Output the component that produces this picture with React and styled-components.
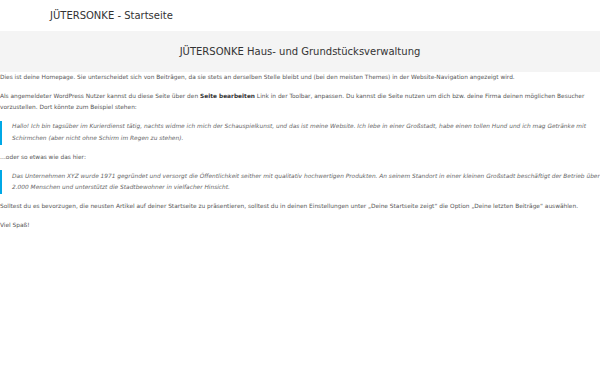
import styled, { createGlobalStyle } from "styled-components";

const GlobalStyle = createGlobalStyle`
  body {
    margin: 0;
    background: #fff;
    font-family: "DejaVu Sans", Verdana, sans-serif;
    color: #555;
  }
`;

export default function App() {
  return (
    <>
      <GlobalStyle />
      <SiteHeader>
        <SiteTitle>JÜTERSONKE - Startseite</SiteTitle>
      </SiteHeader>
      <Hero>
        <HeroTitle>JÜTERSONKE Haus- und Grundstücksverwaltung</HeroTitle>
      </Hero>
      <Content>
        <P>
          Dies ist deine Homepage. Sie unterscheidet sich von Beiträgen, da sie stets an derselben
          Stelle bleibt und (bei den meisten Themes) in der Website-Navigation angezeigt wird.
        </P>
        <P>
          Als angemeldeter WordPress Nutzer kannst du diese Seite über den <strong>Seite bearbeiten</strong> Link
          in der Toolbar, anpassen. Du kannst die Seite nutzen um dich bzw. deine Firma deinen möglichen Besucher
          vorzustellen. Dort könnte zum Beispiel stehen:
        </P>
        <Quote>
          Hallo! Ich bin tagsüber im Kurierdienst tätig, nachts widme ich mich der Schauspielkunst, und das ist
          meine Website. Ich lebe in einer Großstadt, habe einen tollen Hund und ich mag Getränke mit Schirmchen
          (aber nicht ohne Schirm im Regen zu stehen).
        </Quote>
        <P>…oder so etwas wie das hier:</P>
        <Quote>
          Das Unternehmen XYZ wurde 1971 gegründet und versorgt die Öffentlichkeit seither mit qualitativ
          hochwertigen Produkten. An seinem Standort in einer kleinen Großstadt beschäftigt der Betrieb über 2.000
          Menschen und unterstützt die Stadtbewohner in vielfacher Hinsicht.
        </Quote>
        <P>
          Solltest du es bevorzugen, die neusten Artikel auf deiner Startseite zu präsentieren, solltest du in
          deinen Einstellungen unter „Deine Startseite zeigt“ die Option „Deine letzten Beiträge“ auswählen.
        </P>
        <P>Viel Spaß!</P>
      </Content>
    </>
  );
}

const SiteHeader = styled.header`
  height: 31px;
  display: flex;
  align-items: center;
  padding-left: 50px;
`;

const SiteTitle = styled.h1`
  margin: 0;
  font-size: 10px;
  font-weight: 400;
  color: #333;
`;

const Hero = styled.div`
  background: #f4f4f4;
  height: 41px;
  display: flex;
  align-items: center;
  justify-content: center;
`;

const HeroTitle = styled.h2`
  margin: 0;
  font-size: 10px;
  font-weight: 400;
  color: #333;
`;

const Content = styled.main`
  font-size: 5.85px;
  line-height: 11.5px;
  color: #555;
`;

const P = styled.p`
  margin: 0 0 7px;

  strong {
    color: #333;
    font-weight: 700;
  }
`;

const Quote = styled.blockquote`
  margin: 0 0 7px;
  padding: 0.5px 0 0.5px 10px;
  border-left: 2px solid #00a8e6;
  font-style: italic;
  color: #666;
`;
